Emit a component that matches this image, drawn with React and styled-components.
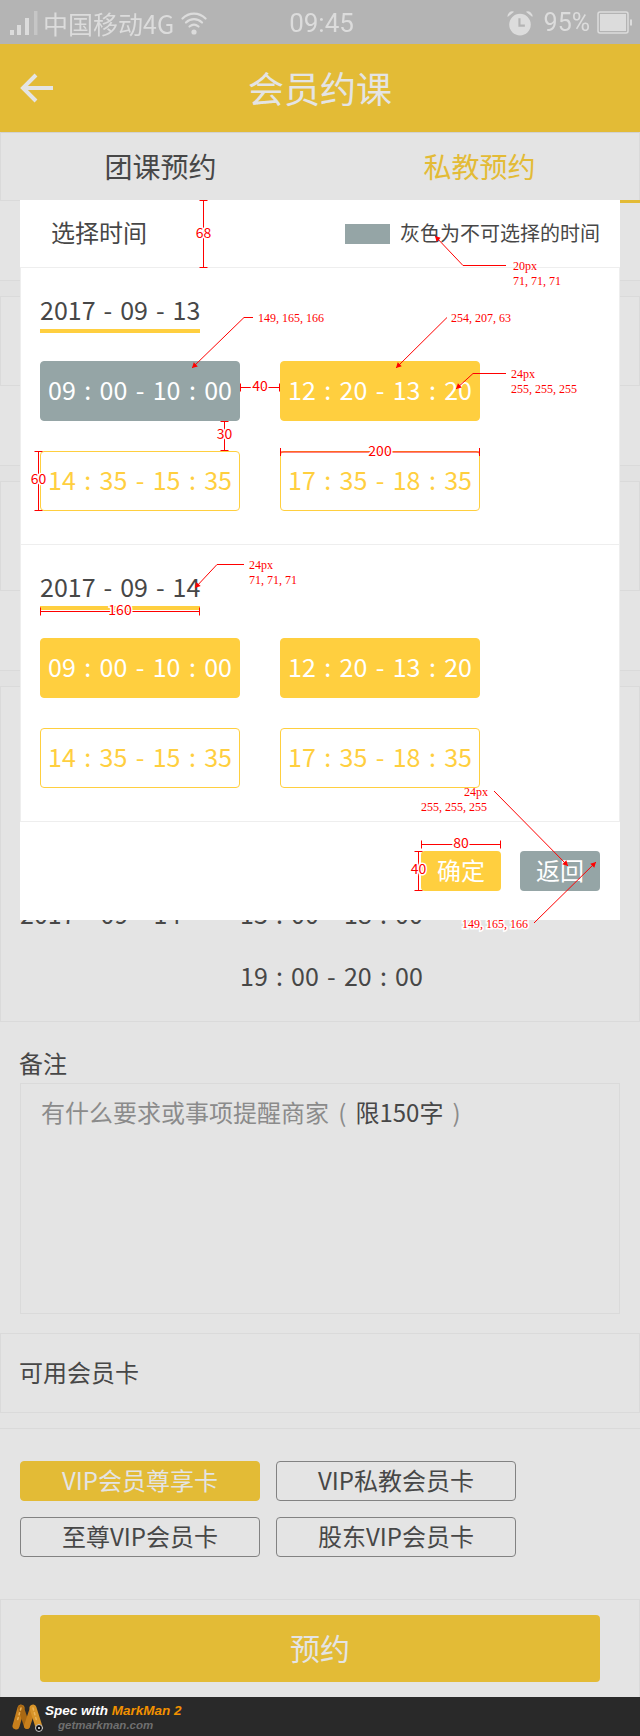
import React from "react";
import styled, { createGlobalStyle } from "styled-components";

const FONT = `"Noto Sans CJK SC", "Noto Sans", "Liberation Sans", sans-serif`;
const BG = "#e4e4e4";
const LINE = "#dadada";
const BRAND = "#e3bb36";
const YELLOW = "#ffcf3f";
const GREY = "#95a5a6";
const INK = "#474747";
const PALE = "#e4e4e4";

const Global = createGlobalStyle`
  html, body { margin: 0; padding: 0; background: ${BG}; }
  * { box-sizing: border-box; }
  #root { width: 640px; height: 1736px; overflow: hidden; }
`;

const Page = styled.div`
  position: relative;
  width: 640px;
  height: 1736px;
  overflow: hidden;
  background: ${BG};
  color: ${INK};
  font-family: ${FONT};
  font-size: 24px;
`;

/* status bar */
const StatusBar = styled.div`
  height: 44px;
  background: #b4b4b4;
  color: #dcdcdc;
  display: grid;
  grid-template-columns: 1fr auto 1fr;
  align-items: center;
  padding: 0 7px 0 10px;
  > * { filter: blur(0.5px); }
`;
const StatusLeft = styled.div`
  display: flex;
  align-items: center;
  height: 44px;
`;
const Carrier = styled.span`
  margin: 0 7px 0 5px;
  font-size: 25px;
  line-height: 42px;
  white-space: nowrap;
`;
const StatusRight = styled.div`
  display: flex;
  align-items: center;
  justify-content: flex-end;
  height: 44px;
`;
const Clock = styled.span`
  font-family: "Roboto", "Liberation Sans", sans-serif;
  font-size: 26px;
  line-height: 44px;
  margin-top: 1px;
`;
const Percent = styled.span`
  font-family: "Roboto", "Liberation Sans", sans-serif;
  font-size: 25px;
  line-height: 44px;
  margin: 0 7px 0 10px;
`;

/* header */
const Header = styled.header`
  height: 88px;
  background: ${BRAND};
  color: ${PALE};
  display: grid;
  grid-template-columns: 1fr auto 1fr;
  align-items: center;
  padding: 0 20px;
`;
const Title = styled.h1`
  margin: 0;
  font-size: 36px;
  font-weight: 400;
  line-height: 86px;
  padding-bottom: 2px;
`;

/* tabs */
const Tabs = styled.nav`
  height: 69px;
  display: grid;
  grid-template-columns: 1fr 1fr;
  border: 1px solid ${LINE};
  border-top-color: #d2d2d2;
`;
const Tab = styled.div`
  position: relative;
  display: flex;
  align-items: center;
  justify-content: center;
  font-size: 28px;
  padding-bottom: 1px;
  color: ${(p) => (p.$active ? BRAND : INK)};
  ${(p) =>
    p.$active &&
    `&::after { content: ""; position: absolute; left: 0; right: -1px; bottom: -3px; height: 3px; background: ${BRAND}; }`}
`;

/* page behind the dialog */
const Plain = styled.div`
  height: ${(p) => p.$h}px;
`;
const Band = styled.div`
  height: ${(p) => p.$h || 16}px;
  border-top: 1px solid ${LINE};
  background: #e2e2e2;
`;
const Panel = styled.section`
  height: ${(p) => p.$h}px;
  border: 1px solid ${LINE};
`;
const SchedulePanel = styled(Panel)`
  padding: 195px 0 0 19px;
  display: grid;
  grid-template-columns: 220px 1fr;
  grid-auto-rows: 62px;
  align-items: center;
  font-size: 25px;
  word-spacing: 2.6px;
  line-height: 62px;
  white-space: nowrap;
`;
const NoteBlock = styled.section`
  height: 311px;
  padding: 0 20px;
`;
const NoteLabel = styled.div`
  height: 61px;
  padding-top: 24px;
  margin-left: -1px;
  line-height: 34px;
`;
const NoteBox = styled.div`
  height: 231px;
  border: 1px solid ${LINE};
  padding: 11px 20px;
  line-height: 34px;
  word-spacing: 3.8px;
  color: #8b8b8b;
`;
const NoteLimit = styled.span`
  color: ${INK};
`;
const CardRow = styled.div`
  height: 80px;
  border: 1px solid ${LINE};
  padding: 0 0 4px 18px;
  display: flex;
  align-items: center;
`;
const ChipPanel = styled.section`
  height: 171px;
  border-top: 1px solid ${LINE};
  padding: 32px 0 0 20px;
  display: grid;
  grid-template-columns: 240px 240px;
  grid-auto-rows: 40px;
  gap: 16px;
`;
const Chip = styled.div`
  border-radius: 4px;
  display: flex;
  align-items: center;
  justify-content: center;
  font-size: 24px;
  padding-bottom: 3px;
  background: ${(p) => (p.$active ? BRAND : "transparent")};
  border: 1px solid ${(p) => (p.$active ? BRAND : "#828282")};
  color: ${(p) => (p.$active ? PALE : INK)};
`;
const SubmitPanel = styled.section`
  height: 98px;
  border: 1px solid ${LINE};
  border-bottom: 0;
  padding: 15px 39px 0;
`;
const SubmitButton = styled.div`
  height: 67px;
  border-radius: 4px;
  background: ${BRAND};
  color: ${PALE};
  font-size: 30px;
  padding-bottom: 4px;
  display: flex;
  align-items: center;
  justify-content: center;
`;

/* MarkMan strip */
const Brand = styled.footer`
  height: 39px;
  background: #292929;
  display: flex;
  padding-left: 12px;
  font-family: "Liberation Sans", sans-serif;
  font-style: italic;
  font-weight: 700;
`;
const BrandText = styled.div`
  margin-left: 1px;
  display: flex;
  flex-direction: column;
`;
const BrandLine = styled.div`
  margin-top: 6px;
  height: 16px;
  line-height: 16px;
  font-size: 13.5px;
  white-space: nowrap;
  color: #fff;
`;
const BrandAccent = styled.span`
  color: #f29100;
`;
const BrandUrl = styled.div`
  margin-left: 13px;
  line-height: 13px;
  font-size: 11.5px;
  white-space: nowrap;
  color: #6f6f6f;
`;

/* dialog */
const Dialog = styled.div`
  position: absolute;
  top: 200px;
  left: 20px;
  width: 600px;
  height: 720px;
  background: #fff;
`;
const DialogHead = styled.div`
  height: 67px;
  display: flex;
  align-items: center;
  justify-content: space-between;
  padding: 0 20px 0 31px;
`;
const HeadTitle = styled.span`
  padding-bottom: 4px;
`;
const Legend = styled.div`
  display: flex;
  align-items: center;
  font-size: 20px;
  line-height: 20px;
`;
const Swatch = styled.span`
  width: 45px;
  height: 20px;
  margin-right: 10px;
  background: ${GREY};
`;
const LegendText = styled.span`
  padding-bottom: 2px;
`;
const DaySection = styled.section`
  height: 278px;
  border: 1px solid #eeeeee;
  & + & { margin-top: -1px; }
  padding-left: 19px;
`;
const DayTitle = styled.div`
  width: 160px;
  height: 65px;
  padding-top: 24px;
  line-height: 34px;
  font-size: 25px;
  border-bottom: 4px solid ${YELLOW};
  word-spacing: 2.4px;
  white-space: nowrap;
`;
const SlotGrid = styled.div`
  margin-top: 28px;
  display: grid;
  grid-template-columns: 200px 200px;
  grid-auto-rows: 60px;
  gap: 30px 40px;
`;
const slotColors = {
  off: `background: ${GREY}; border-color: ${GREY}; color: #fff;`,
  on: `background: ${YELLOW}; border-color: ${YELLOW}; color: #fff;`,
  open: `background: #fff; border-color: ${YELLOW}; color: ${YELLOW};`,
};
const Slot = styled.div`
  border: 1px solid;
  border-radius: 4px;
  display: flex;
  align-items: center;
  justify-content: center;
  font-size: 25px;
  padding-bottom: 4px;
  word-spacing: 2.8px;
  white-space: nowrap;
  ${(p) => slotColors[p.$kind]}
`;
const DialogFoot = styled.div`
  height: 98px;
  display: flex;
  align-items: center;
  justify-content: flex-end;
  gap: 19px;
  padding-right: 20px;
`;
const FootButton = styled.div`
  width: 80px;
  height: 40px;
  border-radius: 4px;
  padding-bottom: 3px;
  background: ${(p) => (p.$grey ? GREY : YELLOW)};
  color: #fff;
  display: flex;
  align-items: center;
  justify-content: center;
`;

/* MarkMan annotations */
const Overlay = styled.svg`
  position: absolute;
  inset: 0;
  pointer-events: none;
`;
const NoteText = styled.text`
  font-family: "Liberation Serif", serif;
  font-size: 12px;
  fill: #f00;
  paint-order: stroke;
  stroke: ${(p) => (p.$halo ? "#fff" : "none")};
  stroke-width: 3px;
`;
const SizeText = styled.text`
  font-family: "Noto Sans CJK SC", sans-serif;
  font-size: 14px;
  fill: #f00;
  text-anchor: middle;
  dominant-baseline: central;
  paint-order: stroke;
  stroke: #fff;
  stroke-width: 3px;
`;

function Leader({ pts }) {
  const [x2, y2] = pts[pts.length - 1];
  const [x1, y1] = pts[pts.length - 2];
  const a = Math.atan2(y2 - y1, x2 - x1);
  const s = 6;
  const p1 = [x2 - s * Math.cos(a - 0.5), y2 - s * Math.sin(a - 0.5)];
  const p2 = [x2 - s * Math.cos(a + 0.5), y2 - s * Math.sin(a + 0.5)];
  return (
    <g>
      <polyline points={pts.map((p) => p.join(",")).join(" ")} fill="none" stroke="#f00" strokeWidth="1" />
      <polygon points={`${x2},${y2} ${p1.join(",")} ${p2.join(",")}`} fill="#f00" />
    </g>
  );
}

function HSize({ x1, x2, y, label, ty }) {
  return (
    <g>
      <path d={`M${x1} ${y}H${x2}M${x1 + 0.5} ${y - 4}V${y + 4}M${x2 - 0.5} ${y - 4}V${y + 4}`} stroke="#f00" strokeWidth="1" fill="none" />
      <SizeText x={(x1 + x2) / 2} y={ty ?? y}>{label}</SizeText>
    </g>
  );
}

function VSize({ x, y1, y2, label, tx, ty }) {
  return (
    <g>
      <path d={`M${x} ${y1 + 0.5}V${y2 - 0.5}M${x - 4} ${y1 + 0.5}H${x + 4}M${x - 4} ${y2 - 0.5}H${x + 4}`} stroke="#f00" strokeWidth="1" fill="none" />
      <SizeText x={tx ?? x} y={ty ?? (y1 + y2) / 2}>{label}</SizeText>
    </g>
  );
}

function Annotations() {
  return (
    <Overlay width="640" height="1736" viewBox="0 0 640 1736">
      <VSize x={203.5} y1={200} y2={268} label="68" ty={231.5} />
      <Leader pts={[[506, 265.5], [463, 265.5], [435, 236]]} />
      <NoteText x={513} y={270}>20px</NoteText>
      <NoteText x={513} y={285}>71, 71, 71</NoteText>

      <Leader pts={[[253, 317.5], [244, 317.5], [192, 368]]} />
      <NoteText x={258} y={322}>149, 165, 166</NoteText>
      <Leader pts={[[447, 317.5], [396, 368]]} />
      <NoteText x={451} y={322}>254, 207, 63</NoteText>
      <Leader pts={[[506, 373.5], [473, 373.5], [456, 389]]} />
      <NoteText x={511} y={378}>24px</NoteText>
      <NoteText x={511} y={393}>255, 255, 255</NoteText>

      <HSize x1={240} x2={280} y={387.5} label="40" ty={385} />
      <VSize x={224.5} y1={421} y2={451} label="30" ty={433} />
      <VSize x={38.5} y1={451} y2={511} label="60" ty={478} />
      <HSize x1={280} x2={480} y={452} label="200" ty={450} />

      <Leader pts={[[244, 564.5], [217, 564.5], [195, 588]]} />
      <NoteText x={249} y={569}>24px</NoteText>
      <NoteText x={249} y={584}>71, 71, 71</NoteText>
      <HSize x1={40} x2={200} y={611.5} label="160" ty={609} />

      <Leader pts={[[494, 791], [568, 866]]} />
      <NoteText x={464} y={796}>24px</NoteText>
      <NoteText x={421} y={811}>255, 255, 255</NoteText>
      <HSize x1={421} x2={501} y={844.5} label="80" ty={842} />
      <VSize x={418.5} y1={851} y2={891} label="40" ty={868} />
      <Leader pts={[[534, 923], [596, 862]]} />
      <NoteText x={462} y={928} $halo>149, 165, 166</NoteText>
    </Overlay>
  );
}

const SignalIcon = () => (
  <svg width="28" height="44" viewBox="0 0 28 44" fill="currentColor">
    <rect x="0" y="29" width="4" height="5" />
    <rect x="7" y="24" width="4" height="10" />
    <rect x="15" y="17" width="4" height="17" />
    <rect x="24" y="10" width="3.5" height="24" opacity="0.45" />
  </svg>
);
const WifiIcon = () => (
  <svg width="26" height="26" viewBox="0 0 26 26" fill="none" stroke="currentColor" strokeWidth="2.2" strokeLinecap="round">
    <path d="M1.5 8.5C8 2 18 2 24.5 8.5" />
    <path d="M5 12.5c4.6-4.4 11.4-4.4 16 0" />
    <path d="M8.5 16.5c2.8-2.4 6.2-2.4 9 0" />
    <circle cx="13" cy="22" r="2.6" fill="currentColor" stroke="none" />
  </svg>
);
const AlarmIcon = () => (
  <svg width="28" height="28" viewBox="0 0 26 26">
    <circle cx="13" cy="14.5" r="10" fill="currentColor" />
    <path d="M1.5 7.5a4.5 4.5 0 0 1 6-5zM24.5 7.5a4.5 4.5 0 0 0-6-5z" fill="currentColor" />
    <path d="M12.5 8.5v7h5" fill="none" stroke="#b4b4b4" strokeWidth="2" />
  </svg>
);
const BatteryIcon = () => (
  <svg width="36" height="24" viewBox="0 0 36 24">
    <rect x="1" y="1" width="30" height="21" rx="2" fill="none" stroke="currentColor" strokeWidth="1.5" />
    <rect x="3" y="3" width="26" height="17" fill="currentColor" />
    <rect x="33" y="8.5" width="2" height="6" fill="currentColor" />
  </svg>
);
const BackIcon = () => (
  <svg width="34" height="30" viewBox="0 0 34 30" fill="none" stroke="currentColor" strokeWidth="4">
    <path d="M33 15H3" />
    <path d="M16 2 3 15l13 13" />
  </svg>
);
const MarkLogo = () => (
  <svg width="32" height="39" viewBox="0 0 32 39" fill="none" strokeLinecap="round">
    <path d="M4 29 9 11" stroke="#c77f1c" strokeWidth="7" />
    <path d="M9 11 15 29" stroke="#a96813" strokeWidth="6" />
    <path d="M15 29 21 11" stroke="#c77f1c" strokeWidth="6" />
    <path d="M21 11 27 30" stroke="#d8952a" strokeWidth="7" />
    <path d="M9 11 5 25M21 11 25 25" stroke="#eab45a" strokeWidth="1.5" strokeDasharray="2 3" />
    <circle cx="27" cy="31" r="3.5" fill="#111" stroke="#ccc" strokeWidth="1" />
    <circle cx="27" cy="31" r="1" fill="#fff" />
  </svg>
);

const days = [
  { date: "2017 - 09 - 13", first: "off" },
  { date: "2017 - 09 - 14", first: "on" },
];

export default function App() {
  return (
    <Page>
      <Global />
      <StatusBar>
        <StatusLeft>
          <SignalIcon />
          <Carrier>中国移动4G</Carrier>
          <WifiIcon />
        </StatusLeft>
        <Clock>09:45</Clock>
        <StatusRight>
          <AlarmIcon />
          <Percent>95%</Percent>
          <BatteryIcon />
        </StatusRight>
      </StatusBar>

      <Header>
        <BackIcon />
        <Title>会员约课</Title>
      </Header>

      <Tabs>
        <Tab>团课预约</Tab>
        <Tab $active>私教预约</Tab>
      </Tabs>

      <Plain $h={79} />
      <Band />
      <Panel $h={90} />
      <Plain $h={79} />
      <Band />
      <Panel $h={110} />
      <Plain $h={79} />
      <Band />
      <SchedulePanel $h={336}>
        <span>2017 - 09 - 14</span>
        <span>13 : 00 - 18 : 00</span>
        <span />
        <span>19 : 00 - 20 : 00</span>
      </SchedulePanel>

      <NoteBlock>
        <NoteLabel>备注</NoteLabel>
        <NoteBox>
          有什么要求或事项提醒商家 ( <NoteLimit>限150字</NoteLimit> )
        </NoteBox>
      </NoteBlock>

      <CardRow>可用会员卡</CardRow>
      <Plain $h={15} />
      <ChipPanel>
        <Chip $active>VIP会员尊享卡</Chip>
        <Chip>VIP私教会员卡</Chip>
        <Chip>至尊VIP会员卡</Chip>
        <Chip>股东VIP会员卡</Chip>
      </ChipPanel>
      <SubmitPanel>
        <SubmitButton>预约</SubmitButton>
      </SubmitPanel>

      <Brand>
        <MarkLogo />
        <BrandText>
          <BrandLine>
            Spec with <BrandAccent>MarkMan 2</BrandAccent>
          </BrandLine>
          <BrandUrl>getmarkman.com</BrandUrl>
        </BrandText>
      </Brand>

      <Dialog>
        <DialogHead>
          <HeadTitle>选择时间</HeadTitle>
          <Legend>
            <Swatch />
            <LegendText>灰色为不可选择的时间</LegendText>
          </Legend>
        </DialogHead>
        {days.map((d) => (
          <DaySection key={d.date}>
            <DayTitle>{d.date}</DayTitle>
            <SlotGrid>
              <Slot $kind={d.first}>09 : 00 - 10 : 00</Slot>
              <Slot $kind="on">12 : 20 - 13 : 20</Slot>
              <Slot $kind="open">14 : 35 - 15 : 35</Slot>
              <Slot $kind="open">17 : 35 - 18 : 35</Slot>
            </SlotGrid>
          </DaySection>
        ))}
        <DialogFoot>
          <FootButton>确定</FootButton>
          <FootButton $grey>返回</FootButton>
        </DialogFoot>
      </Dialog>

      <Annotations />
    </Page>
  );
}
